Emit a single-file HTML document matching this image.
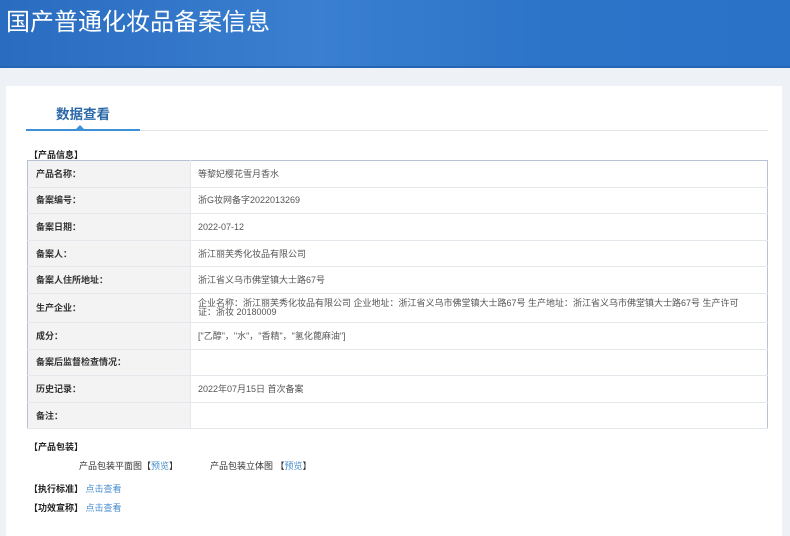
<!DOCTYPE html>
<html><head><meta charset="utf-8"><style>
*{margin:0;padding:0;box-sizing:border-box}
body{width:790px;height:530px;overflow:hidden;background:#eef1f5;font-family:"Liberation Sans","Noto Sans CJK SC",sans-serif;font-size:9px;color:#333;position:relative}
.hd{position:absolute;left:0;top:0;width:790px;height:68px;background:linear-gradient(90deg,#2a6cc0,#3a7fd0 40%,#2c74c8 70%,#2a72c8);border-bottom:2px solid #2466b5}
.hd h1{position:absolute;left:6px;top:2px;font-size:24px;font-weight:normal;color:#fff}
.card{position:absolute;left:6px;top:86px;width:776px;height:450px;background:#fff}
.tab{position:absolute;left:56px;top:103px;font-size:13.5px;font-weight:bold;color:#2a68a8}
.tl{position:absolute;left:26px;top:130px;width:742px;height:1px;background:#e2e4e8}
.tb{position:absolute;left:26px;top:129px;width:114px;height:2px;background:#3d8fd8}
.tri{position:absolute;left:76px;top:125px;width:0;height:0;border-left:4px solid transparent;border-right:4px solid transparent;border-bottom:4px solid #3d8fd8}
.sec{position:absolute;left:29px;font-weight:bold;font-size:9px;color:#222;line-height:12px}
table{position:absolute;left:27px;top:160px;width:741px;border-collapse:collapse;border:1px solid #b8c2d4}
td{border-bottom:1px solid #e4e7ec;height:26.6px;vertical-align:middle;line-height:10px}
td.l{width:163px;padding-left:8px;background:#f3f3f3;font-weight:bold;color:#333;border-right:1px solid #e4e7ec}
td.v{color:#555;padding:0 22px 0 7px}
a{color:#4a8ed0;text-decoration:none}
</style></head><body>
<div class="hd"><h1>国产普通化妆品备案信息</h1></div>
<div class="card"></div>
<div class="tab">数据查看</div>
<div class="tl"></div><div class="tb"></div><div class="tri"></div>
<div class="sec" style="top:149px">【产品信息】</div>
<table>
<tr><td class="l">产品名称：</td><td class="v">等黎妃樱花雪月香水</td></tr>
<tr><td class="l">备案编号：</td><td class="v">浙G妆网备字2022013269</td></tr>
<tr><td class="l">备案日期：</td><td class="v">2022-07-12</td></tr>
<tr><td class="l">备案人：</td><td class="v">浙江丽芙秀化妆品有限公司</td></tr>
<tr><td class="l">备案人住所地址：</td><td class="v">浙江省义乌市佛堂镇大士路67号</td></tr>
<tr><td class="l" style="height:29px">生产企业：</td><td class="v" style="line-height:9px">企业名称：浙江丽芙秀化妆品有限公司 企业地址：浙江省义乌市佛堂镇大士路67号 生产地址：浙江省义乌市佛堂镇大士路67号 生产许可证：浙妆 20180009</td></tr>
<tr><td class="l">成分：</td><td class="v">["乙醇"，"水"，"香精"，"氢化蓖麻油"]</td></tr>
<tr><td class="l">备案后监督检查情况：</td><td class="v"></td></tr>
<tr><td class="l">历史记录：</td><td class="v">2022年07月15日 首次备案</td></tr>
<tr><td class="l">备注：</td><td class="v"></td></tr>
</table>
<div class="sec" style="top:441px">【产品包装】</div>
<div style="position:absolute;left:79px;top:460px;color:#333;line-height:12px">产品包装平面图【<a>预览</a>】</div>
<div style="position:absolute;left:210px;top:460px;color:#333;line-height:12px">产品包装立体图 【<a>预览</a>】</div>
<div class="sec" style="top:483px">【执行标准】 <a style="font-weight:normal">点击查看</a></div>
<div class="sec" style="top:502px">【功效宣称】 <a style="font-weight:normal">点击查看</a></div>
</body></html>
